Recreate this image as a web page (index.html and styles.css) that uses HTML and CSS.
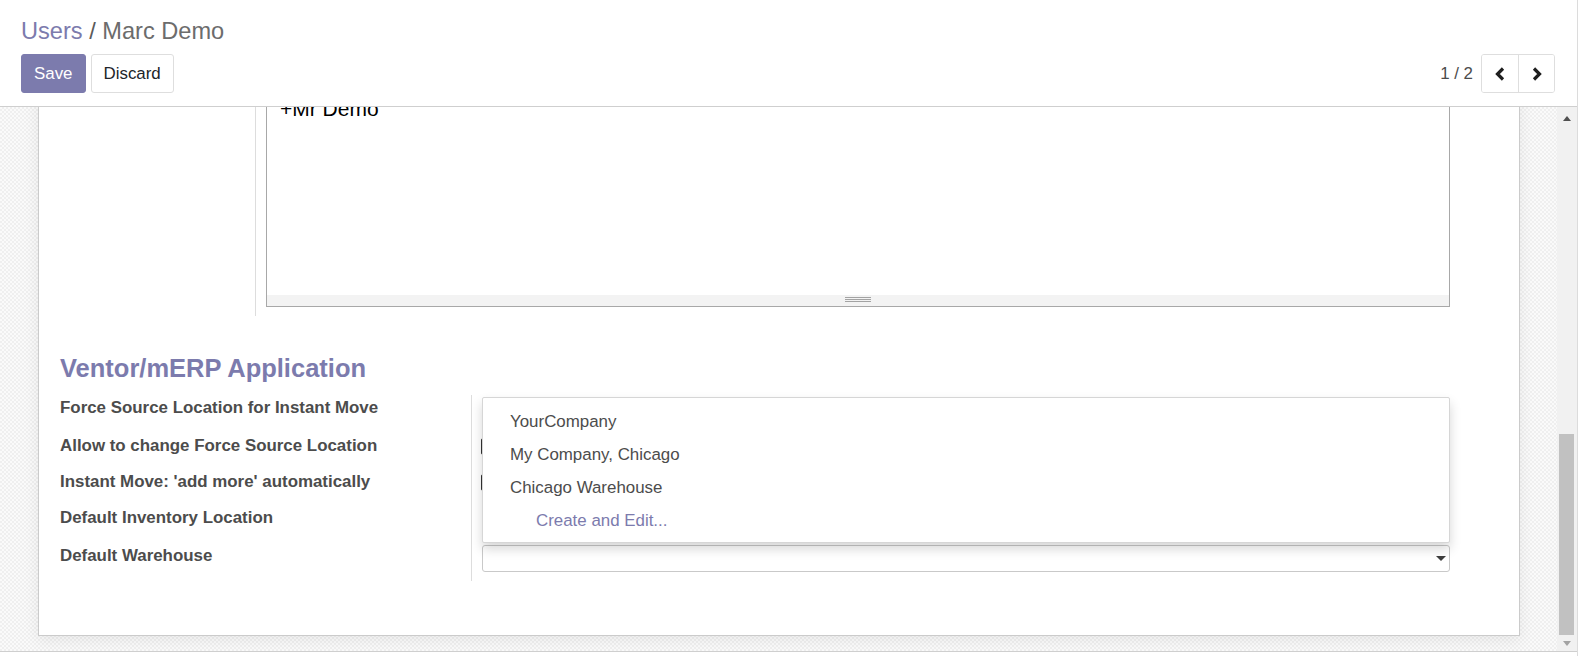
FILE: index.html
```html
<!DOCTYPE html>
<html>
<head>
<meta charset="utf-8">
<link rel="stylesheet" href="styles.css">
</head>
<body>
<div class="app">
  <header class="cp">
    <div class="breadcrumb"><span class="bc-link">Users</span><span class="bc-sep"> / </span><span class="bc-cur">Marc Demo</span></div>
    <div class="cp-row">
      <div class="cp-buttons">
        <button class="btn btn-primary">Save</button>
        <button class="btn btn-secondary">Discard</button>
      </div>
      <div class="pager">
        <span class="pager-value">1 / 2</span>
        <div class="pager-btns">
          <button class="pbtn"><svg width="12" height="14" viewBox="0 0 12 14"><polyline points="9,1.5 3.5,7 9,12.5" fill="none" stroke="#1f1f1f" stroke-width="3.2" stroke-linejoin="miter"/></svg></button>
          <button class="pbtn"><svg width="12" height="14" viewBox="0 0 12 14"><polyline points="3,1.5 8.5,7 3,12.5" fill="none" stroke="#1f1f1f" stroke-width="3.2" stroke-linejoin="miter"/></svg></button>
        </div>
      </div>
    </div>
  </header>
  <div class="main">
    <div class="content">
      <div class="sheet">
        <div class="group group1">
          <div class="lbl"></div>
          <div class="fld fld-editor">
            <div class="editor">
              <div class="editor-body"><p class="sig">+Mr Demo</p></div>
              <div class="editor-resize"><span class="grip"></span></div>
            </div>
          </div>
        </div>
        <h2 class="sep-title">Ventor/mERP Application</h2>
        <div class="group group2">
          <div class="lbl">Force Source Location for Instant Move</div>
          <div class="fld fld-anchor">
            <div class="m2o"></div>
            <ul class="dropdown">
              <li class="dd-item">YourCompany</li>
              <li class="dd-item">My Company, Chicago</li>
              <li class="dd-item">Chicago Warehouse</li>
              <li class="dd-item dd-create">Create and Edit...</li>
            </ul>
          </div>
          <div class="lbl">Allow to change Force Source Location</div>
          <div class="fld"><span class="checkbox"></span></div>
          <div class="lbl">Instant Move: 'add more' automatically</div>
          <div class="fld"><span class="checkbox"></span></div>
          <div class="lbl">Default Inventory Location</div>
          <div class="fld"><div class="m2o"></div></div>
          <div class="lbl">Default Warehouse</div>
          <div class="fld"><div class="select"><span class="caret"></span></div></div>
        </div>
      </div>
    </div>
    <div class="scrollbar">
      <div class="sb-btn"><span class="tri-up"></span></div>
      <div class="sb-thumb"></div>
      <div class="sb-btn sb-down"><span class="tri-down"></span></div>
    </div>
  </div>
  <div class="footer"></div>
</div>
</body>
</html>
```

FILE: styles.css
```css
html, body {
  margin: 0;
  padding: 0;
  background: #fff;
}
body {
  font-family: "Liberation Sans", Arial, sans-serif;
  font-size: 16.9px;
  color: #4c4c4c;
}
.app {
  width: 1578px;
  height: 656px;
  box-sizing: border-box;
  border-right: 1px solid #dcdcdc;
  display: flex;
  flex-direction: column;
  overflow: hidden;
}
/* control panel */
.cp {
  height: 107px;
  box-sizing: border-box;
  border-bottom: 1px solid #cfcfcf;
  padding: 17px 22px 0 21px;
  background: #fff;
}
.breadcrumb {
  font-size: 23.6px;
  line-height: 28px;
  height: 28px;
  white-space: nowrap;
}
.bc-link { color: #7c7bad; }
.bc-sep { color: #5a5a5a; }
.bc-cur { color: #6c6c6c; }
.cp-row {
  margin-top: 9px;
  display: flex;
  justify-content: space-between;
  align-items: center;
  height: 39px;
}
.cp-buttons {
  display: flex;
  gap: 5px;
}
.btn {
  font-family: inherit;
  font-size: 16.9px;
  height: 39px;
  padding: 0 12px;
  border-radius: 3px;
  border: 1px solid #dedede;
  cursor: pointer;
  line-height: 37px;
}
.btn-primary {
  background: #7c7bad;
  border-color: #7c7bad;
  color: #fff;
}
.btn-secondary {
  background: #fff;
  color: #212529;
  padding: 0 12px;
}
.pager {
  display: flex;
  align-items: center;
  gap: 8px;
}
.pager-value {
  color: #4c4c4c;
  font-size: 16.9px;
}
.pager-btns {
  display: flex;
  border: 1px solid #dedede;
  border-radius: 3px;
  height: 39px;
  box-sizing: border-box;
  overflow: hidden;
}
.pbtn {
  width: 36px;
  height: 37px;
  border: none;
  background: #fff;
  padding: 0;
  display: flex;
  align-items: center;
  justify-content: center;
}
.pbtn + .pbtn {
  border-left: 1px solid #dedede;
}
/* main */
.main {
  display: flex;
  height: 544px;
  flex: none;
}
.content {
  width: 1557px;
  flex: none;
  overflow: hidden;
  background-color: #f6f6f6;
  background-image: repeating-conic-gradient(#efefef 0 25%, #fafafa 0 50%);
  background-size: 4px 4px;
}
.sheet {
  width: 1482px;
  box-sizing: border-box;
  margin: -60px 0 0 38px;
  padding: 0 69px 54px 21px;
  background: #fff;
  border: 1px solid #cbcbcb;
  box-shadow: 0 4px 14px rgba(0, 0, 0, 0.07);
}
.group {
  display: grid;
}
.group1 {
  grid-template-columns: 196px 1fr;
}
.group2 {
  grid-template-columns: 412px 1fr;
  grid-template-rows: 38px 36px 36px 38px 38px;
}
.lbl {
  box-sizing: border-box;
  border-right: 1px solid #dddddd;
  font-weight: bold;
  line-height: 22px;
  padding-top: 2px;
  color: #4c4c4c;
  white-space: nowrap;
}
.fld {
  padding-left: 10px;
}
.fld-editor {
  padding-bottom: 9px;
}
.editor {
  height: 259px;
  box-sizing: border-box;
  border: 1px solid #a8a8a8;
  display: flex;
  flex-direction: column;
}
.editor-body {
  flex: 1;
  padding: 47px 11px 0 13px;
  overflow: hidden;
}
.sig {
  margin: 0;
  font-size: 21px;
  line-height: 25px;
  color: #000;
}
.editor-resize {
  height: 11px;
  background: #f3f3f3;
  display: flex;
  justify-content: center;
  align-items: flex-start;
}
.grip {
  margin-top: 2px;
  width: 26px;
  height: 5px;
  background: repeating-linear-gradient(to bottom, #a3a3a3 0 1px, transparent 1px 2px);
}
.sep-title {
  margin: 37px 0 12px;
  font-size: 25.5px;
  line-height: 30px;
  font-weight: bold;
  color: #7c7bad;
}
.fld-anchor {
  position: relative;
}
.m2o {
  margin-top: 2px;
  height: 27px;
  box-sizing: border-box;
  border-bottom: 1px solid #ccc;
}
.checkbox {
  display: block;
  margin: 5px 0 0 -1px;
  width: 16px;
  height: 17px;
  box-sizing: border-box;
  border: 1px solid #333;
  border-radius: 2px;
  background: #fff;
}
.select {
  margin-top: 2px;
  height: 27px;
  box-sizing: border-box;
  border: 1px solid #c9c9c9;
  border-radius: 3px;
  background: #fff;
  display: flex;
  justify-content: flex-end;
  align-items: center;
  padding-right: 3px;
}
.caret {
  width: 0;
  height: 0;
  border-left: 5px solid transparent;
  border-right: 5px solid transparent;
  border-top: 5px solid #3d3d3d;
}
.dropdown {
  position: absolute;
  top: 2px;
  left: 10px;
  right: 0;
  height: 146px;
  box-sizing: border-box;
  margin: 0;
  padding: 7px 0 6px;
  list-style: none;
  background: #fff;
  border: 1px solid #d6d6d6;
  border-radius: 2px;
  box-shadow: 0 6px 12px rgba(0, 0, 0, 0.16);
  z-index: 5;
}
.dd-item {
  height: 33px;
  line-height: 33px;
  padding-left: 27px;
  color: #4c4c4c;
  font-size: 16.9px;
}
.dd-create {
  padding-left: 53px;
  color: #7c7bad;
}
/* scrollbar */
.scrollbar {
  width: 20px;
  flex: none;
  background: #f1f1f1;
  display: flex;
  flex-direction: column;
}
.sb-btn {
  height: 22px;
  display: flex;
  align-items: center;
  justify-content: center;
  flex: none;
}
.sb-down {
  height: 16px;
  align-items: center;
}
.tri-up {
  width: 0;
  height: 0;
  border-left: 4px solid transparent;
  border-right: 4px solid transparent;
  border-bottom: 5px solid #505050;
}
.tri-down {
  width: 0;
  height: 0;
  border-left: 4px solid transparent;
  border-right: 4px solid transparent;
  border-top: 5px solid #a3a3a3;
}
.sb-thumb {
  margin: auto 3px 0 2px;
  height: 201px;
  background: #c1c1c1;
  flex: none;
}
.footer {
  flex: 1;
  border-top: 1px solid #cfcfcf;
  background: #fff;
}
```
